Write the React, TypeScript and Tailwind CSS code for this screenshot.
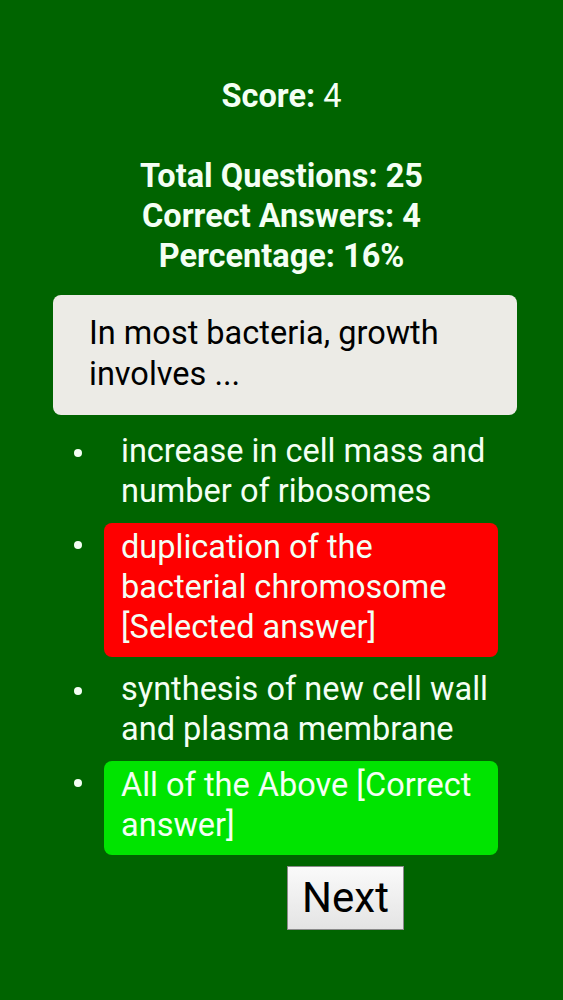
import { memo } from "react";

const answers = [
  { text: "increase in cell mass and number of ribosomes", state: "" },
  { text: "duplication of the bacterial chromosome [Selected answer]", state: "wrong" },
  { text: "synthesis of new cell wall and plasma membrane", state: "" },
  { text: "All of the Above [Correct answer]", state: "right" },
];

const App = () => {
  return (
    <div className="min-h-[1000px] bg-[#006400] font-['Roboto',sans-serif] text-[#f4fff4]">
      <div className="pt-[76px] text-center text-[32.5px] leading-[40px]">
        <div>
          <span className="font-bold">Score:</span> 4
        </div>
        <div className="mt-[40px] font-bold">
          <div>Total Questions: 25</div>
          <div>Correct Answers: 4</div>
          <div>Percentage: 16%</div>
        </div>
      </div>

      <div className="mx-[53px] mt-[19px] w-[464px] rounded-lg bg-[#ecebe6] pl-[36px] pr-[24px] pt-[18px] pb-[20px] text-[32.5px] leading-[41px] text-black">
        In most bacteria, growth involves ...
      </div>

      <ul className="mt-[16px] flex flex-col gap-[12px]">
        {answers.map((a) => (
          <li key={a.text} className="flex items-start">
            <span className="flex w-[104px] justify-end pr-[22px] pt-[18px]">
              <span className="block h-[8px] w-[8px] rounded-full bg-[#f4fff4]"></span>
            </span>
            <span
              className={
                a.state === "wrong"
                  ? "w-[394px] rounded-lg bg-[#fe0000] pl-[17px] pr-[8px] pt-[4px] pb-[10px] text-[32.5px] leading-[40px]"
                  : a.state === "right"
                  ? "w-[394px] rounded-lg bg-[#00e400] pl-[17px] pr-[8px] pt-[4px] pb-[10px] text-[32.5px] leading-[40px]"
                  : "w-[394px] pl-[17px] pr-[2px] text-[32.5px] leading-[40px]"
              }
            >
              {a.text}
            </span>
          </li>
        ))}
      </ul>

      <div className="mt-[11px] pl-[287px]">
        <button className="h-[64px] w-[117px] border border-[#8a8a8a] bg-gradient-to-b from-[#fafafa] to-[#e4e4e4] text-[42px] leading-none text-black">
          Next
        </button>
      </div>
    </div>
  );
};

export default memo(App);
